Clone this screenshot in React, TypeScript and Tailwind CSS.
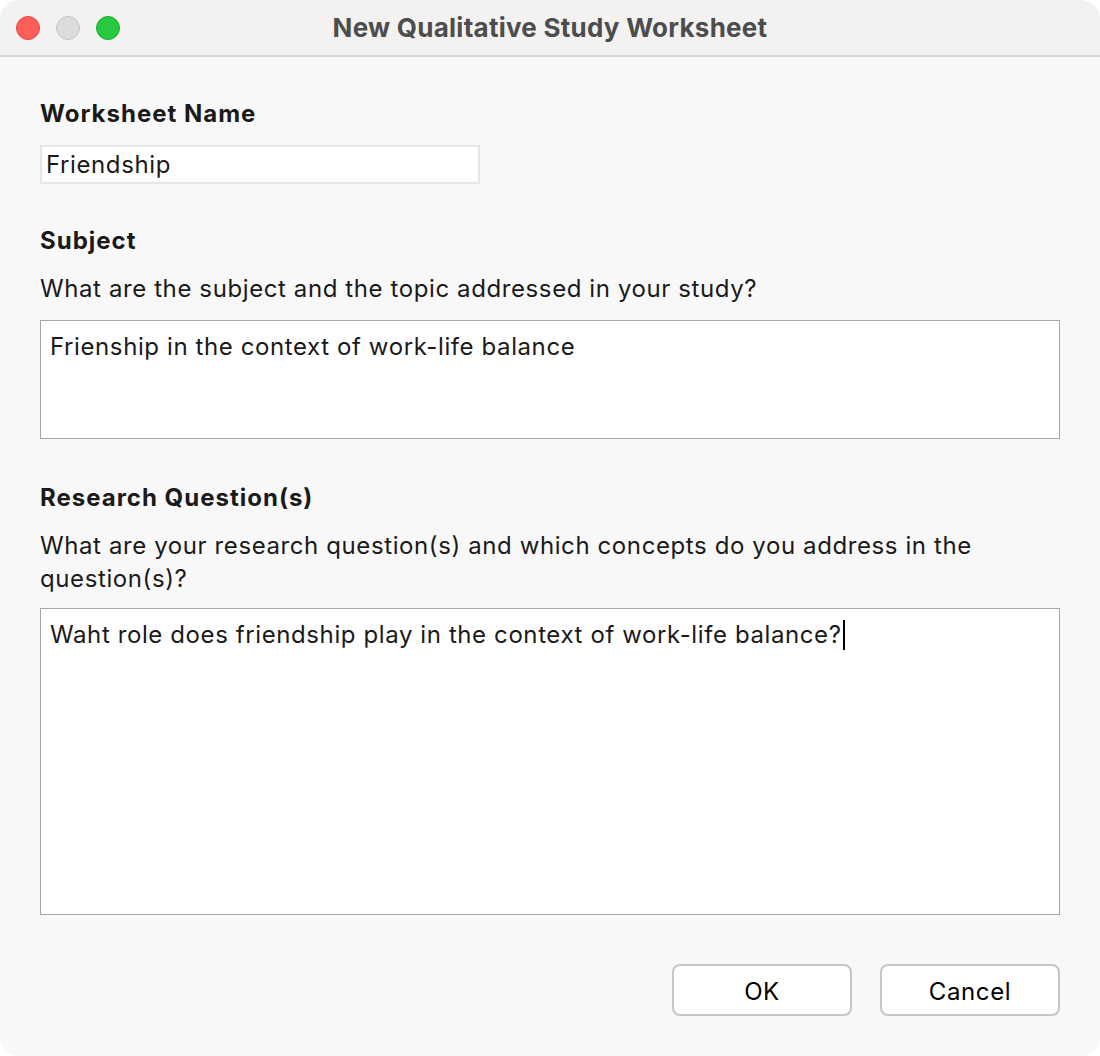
import React from "react";

export default function App() {
  return (
    <div className="w-[1100px] h-[1056px] bg-white">
      <div className="w-[1100px] h-[1056px] rounded-[20px] overflow-hidden bg-[#f8f8f8] flex flex-col font-['Inter',sans-serif]">
        <div className="h-[57px] shrink-0 bg-[#f3f2f1] border-b-2 border-[#d9d9d9] flex items-center relative">
          <div className="flex items-center gap-[16px] pl-[16px]">
            <div className="w-[24px] h-[24px] rounded-full bg-[#fe5f57] border border-[#e14942]" />
            <div className="w-[24px] h-[24px] rounded-full bg-[#dcdcdc] border border-[#c4c4c4]" />
            <div className="w-[24px] h-[24px] rounded-full bg-[#28c840] border border-[#1ea832]" />
          </div>
          <div className="absolute left-0 right-0 top-0 h-[55px] flex items-center justify-center text-[26px] font-bold text-[#4d4d4d] tracking-[0.25px]">
            New Qualitative Study Worksheet
          </div>
        </div>
        <div className="flex flex-col px-[40px] pt-[40px] text-[#1a1a1a] text-[24px] tracking-[0.6px]">
          <div className="font-bold leading-[34px] h-[34px] tracking-[1px]">Worksheet Name</div>
          <div className="mt-[14px] w-[440px] h-[39px] bg-white border-2 border-[#e6e6e6] flex items-center pl-[4px] leading-none">
            Friendship
          </div>
          <div className="mt-[40px] font-bold leading-[34px] h-[34px] tracking-[1px]">Subject</div>
          <div className="mt-[14px] leading-[33px]">What are the subject and the topic addressed in your study?</div>
          <div className="mt-[15px] h-[119px] bg-white border border-[#a6a6a6] px-[9px] pt-[9px] leading-[33px]">
            Frienship in the context of work-life balance
          </div>
          <div className="mt-[42px] font-bold leading-[34px] h-[34px] tracking-[1px]">Research Question(s)</div>
          <div className="mt-[14px] leading-[33px] pr-[80px]">What are your research question(s) and which concepts do you address in the question(s)?</div>
          <div className="mt-[13px] h-[307px] bg-white border border-[#a6a6a6] px-[9px] pt-[9px] leading-[33px]">
            Waht role does friendship play in the context of work-life balance?<span className="inline-block w-[2px] h-[30px] bg-black align-middle ml-[1px] -mt-[3px]" />
          </div>
          <div className="mt-[49px] flex justify-end gap-[28px]">
            <button className="w-[180px] h-[52px] rounded-[8px] bg-white border-2 border-[#c6c6c6] text-[24px] text-black tracking-[0.6px] pt-[3px]">OK</button>
            <button className="w-[180px] h-[52px] rounded-[8px] bg-white border-2 border-[#c6c6c6] text-[24px] text-black tracking-[0.6px] pt-[3px]">Cancel</button>
          </div>
        </div>
      </div>
    </div>
  );
}
